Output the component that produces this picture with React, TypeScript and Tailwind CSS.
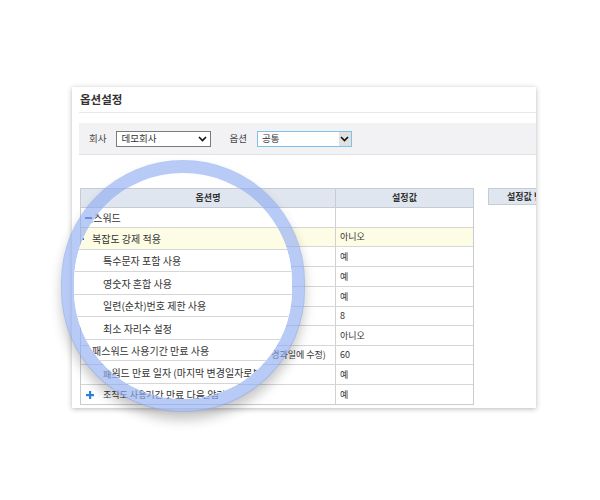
import React from 'react';

type Row = {
  name: string;
  value: string;
  pad: number;
  icon?: 'minus' | 'plus';
  active?: boolean;
  h: number;
};

const rows: Row[] = [
  { name: '패스워드', value: '', pad: 14, icon: 'minus', h: 20 },
  { name: '복잡도 강제 적용', value: '아니오', pad: 14, icon: 'minus', active: true, h: 19 },
  { name: '특수문자 포함 사용', value: '예', pad: 22, h: 20 },
  { name: '영숫자 혼합 사용', value: '예', pad: 22, h: 20 },
  { name: '일련(순차)번호 제한 사용', value: '예', pad: 22, h: 20 },
  { name: '최소 자리수 설정', value: '8', pad: 22, h: 19 },
  { name: '패스워드 사용기간 만료 사용', value: '아니오', pad: 14, h: 20 },
  { name: '패스워드 만료 일자 (마지막 변경일자로부터 경과일에 수정)', value: '60', pad: 28, h: 19 },
  { name: '패스워드 만료 사전 알림 메일 발송 사용', value: '예', pad: 22, h: 20 },
  { name: '조직도 사용기간 만료 다음 알림', value: '예', pad: 22, icon: 'plus', h: 19 },
];

// rows as they appear enlarged inside the magnifier
const zoomRows: Row[] = [
  { name: '패스워드', value: '', pad: 16, h: 20 },
  { name: '복잡도 강제 적용', value: '', pad: 24, icon: 'minus', active: true, h: 22 },
  { name: '특수문자 포함 사용', value: '', pad: 35, h: 22 },
  { name: '영숫자 혼합 사용', value: '', pad: 35, h: 23 },
  { name: '일련(순차)번호 제한 사용', value: '', pad: 35, h: 22 },
  { name: '최소 자리수 설정', value: '', pad: 35, h: 23 },
  { name: '패스워드 사용기간 만료 사용', value: '', pad: 24, h: 21 },
  { name: '패스워드 만료 일자 (마지막 변경일자로부터 경과일에 수정)', value: '', pad: 25, h: 23 },
  { name: '조직도 사용기간 만료 다음 알림', value: '', pad: 29, icon: 'plus', h: 22 },
];

const Minus = ({ className = '' }: { className?: string }) => (
  <span className={`block h-[2px] w-[7px] bg-[#2a6cc4] ${className}`} />
);

const Plus = ({ className = '' }: { className?: string }) => (
  <svg width="8" height="8" viewBox="0 0 8 8" className={className}>
    <rect x="3" y="0" width="2.2" height="8" fill="#2f7fd6" />
    <rect x="0" y="3" width="8" height="2.2" fill="#2f7fd6" />
  </svg>
);

const Chevron = () => (
  <svg width="9" height="6" viewBox="0 0 9 6">
    <polyline points="1,1 4.5,4.5 8,1" fill="none" stroke="#111" strokeWidth="1.6" />
  </svg>
);

const Select = ({ label, focused }: { label: string; focused?: boolean }) => (
  <div
    className={`ml-[10px] flex h-[16px] w-[95px] items-center justify-between bg-white pl-[4px] text-[9.5px] text-[#333] ${
      focused ? 'border border-[#7cc3ea]' : 'border border-[#7a7a7a] pr-[3px]'
    }`}
  >
    <span>{label}</span>
    {focused ? (
      <span className="flex h-full w-[12px] items-center justify-center bg-[#e1e1e1]">
        <Chevron />
      </span>
    ) : (
      <Chevron />
    )}
  </div>
);

const App = () => {
  return (
    <div className="relative h-[500px] w-[600px] overflow-hidden bg-white pl-[72px] pt-[87px] font-['Noto_Sans_CJK_KR','Noto_Sans',sans-serif] text-[#333]">
      <div className="h-[321px] w-[464px] overflow-hidden bg-white shadow-[0_1px_5px_rgba(0,0,0,0.28)]">
        <div className="ml-[7px] flex h-[26px] items-center border-b border-[#e8e8e8] pl-[1px] text-[11.5px] font-bold text-[#333]">
          옵션설정
        </div>

        <div className="ml-[7px] mt-[10px] flex h-[32px] items-center border-b border-[#e3e3e3] bg-[#f2f2f4] pl-[10px] text-[9.5px] text-[#444]">
          <span>회사</span>
          <Select label="데모회사" />
          <span className="ml-[18px]">옵션</span>
          <Select label="공통" focused />
        </div>

        <div className="ml-[8px] mt-[33px] flex items-start">
          <div className="w-[394px] shrink-0 border border-[#c7ccd4] text-[9px]">
            <div className="flex h-[19px] border-b border-[#c7ccd4] bg-[#dfe6ef] font-bold">
              <div className="flex w-[255px] items-center justify-center border-r border-[#c7ccd4]">옵션명</div>
              <div className="flex flex-1 items-center justify-center">설정값</div>
            </div>
            {rows.map((r, i) => (
              <div
                key={r.name}
                style={{ height: r.h }}
                className={`flex ${i < rows.length - 1 ? 'border-b border-[#d6d6d6]' : ''} ${
                  r.active ? 'bg-[#fdfde6]' : 'bg-white'
                }`}
              >
                <div
                  style={{ paddingLeft: r.pad }}
                  className="relative flex w-[255px] items-center whitespace-nowrap border-r border-[#d0d0d0]"
                >
                  {r.icon === 'minus' && <Minus className="absolute left-[4px] top-1/2 -translate-y-1/2" />}
                  {r.icon === 'plus' && <Plus className="absolute left-[5px] top-1/2 -translate-y-1/2" />}
                  {r.name}
                </div>
                <div className="flex flex-1 items-center pl-[4px]">{r.value}</div>
              </div>
            ))}
          </div>
          <div className="ml-[14px] flex h-[17px] w-[70px] shrink-0 items-center whitespace-nowrap border border-[#c7ccd4] bg-[#dfe6ef] pl-[18px] text-[9px] font-bold">
            설정값 변경
          </div>
        </div>
      </div>

      {/* magnifier */}
      <div className="absolute left-[61px] top-[160px] h-[252px] w-[244px] overflow-hidden rounded-full border-[13px] border-[rgba(140,170,240,0.62)] bg-white bg-clip-padding shadow-[0_8px_12px_rgba(0,0,0,0.22)]">
        <div className="absolute left-[-6px] top-[15px] w-[268px] text-[10px]">
          <div className="ml-[12px] flex h-[20px] items-center justify-center border border-[#c7ccd4] bg-[#dfe6ef] text-[9px] font-bold">
            옵션명
          </div>
          {zoomRows.map((r) => (
            <div
              key={r.name}
              style={{ height: r.h, paddingLeft: r.pad }}
              className={`relative flex items-center whitespace-nowrap border-b border-[#d6d6d6] ${
                r.active ? 'bg-[#fdfde6]' : 'bg-white'
              }`}
            >
              {r.icon === 'minus' && <Minus className="absolute left-[9px] top-1/2 -translate-y-1/2" />}
              {r.icon === 'plus' && <Plus className="absolute left-[17px] top-1/2 -translate-y-1/2" />}
              {r.name}
            </div>
          ))}
        </div>
      </div>
    </div>
  );
};

export default App;
